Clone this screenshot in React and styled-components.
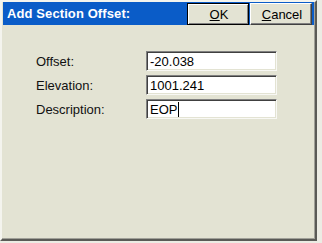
import React from 'react';
import styled, { createGlobalStyle } from 'styled-components';

const GlobalStyle = createGlobalStyle`
  html, body {
    margin: 0;
    padding: 0;
    background: #ecece4;
  }
  body {
    font-family: "Liberation Sans", Arial, sans-serif;
  }
`;

const fields = [
  { label: 'Offset:', value: '-20.038' },
  { label: 'Elevation:', value: '1001.241' },
  { label: 'Description:', value: 'EOP', focused: true },
];

const App = () => (
  <>
    <GlobalStyle />
    <Dialog>
      <TitleBar>
        <Title>Add Section Offset:</Title>
        <Buttons>
          <Button $default><u>O</u>K</Button>
          <Button><u>C</u>ancel</Button>
        </Buttons>
      </TitleBar>

      <Form>
        {fields.map(f => (
          <React.Fragment key={f.label}>
            <Label>{f.label}</Label>
            <Field>
              {f.value}
              {f.focused && <Caret />}
            </Field>
          </React.Fragment>
        ))}
      </Form>
    </Dialog>
  </>
);

export default App;

const Dialog = styled.div`
  box-sizing: border-box;
  width: 317px;
  height: 241px;
  background: #e3e3d3;
  border-style: solid;
  border-width: 2px 2px 2px 2px;
  border-color: #f4f4ee #5a5a56 #5a5a56 #f4f4ee;
  box-shadow: inset -1px -1px 0 #a0a098;
  padding: 0 1px 0 1px;
  display: flex;
  flex-direction: column;
`;

const TitleBar = styled.div`
  height: 23px;
  background: #0a5cc8;
  display: flex;
  align-items: flex-end;
  justify-content: space-between;
  padding-right: 2px;
`;

const Title = styled.div`
  align-self: center;
  padding-left: 4px;
  color: #fff;
  font-weight: bold;
  font-size: 13px;
  letter-spacing: 0.1px;
`;

const Buttons = styled.div`
  display: flex;
  gap: 1px;
`;

const Button = styled.div`
  box-sizing: border-box;
  width: 62px;
  height: 22px;
  display: flex;
  align-items: center;
  justify-content: center;
  background: #e3e3d3;
  font-size: 13px;
  color: #000;
  border: 1px solid;
  border-color: ${({ $default }) => ($default ? '#000' : '#fff #404040 #404040 #fff')};
  box-shadow: ${({ $default }) =>
    $default
      ? 'inset 1px 1px 0 #fff, inset -1px -1px 0 #808080'
      : 'inset -1px -1px 0 #808080'};
  padding-left: 2px;

  u {
    text-underline-offset: 1px;
  }
`;

const Form = styled.div`
  display: grid;
  grid-template-columns: 110px 131px;
  grid-auto-rows: 20px;
  row-gap: 4px;
  padding: 26px 0 0 33px;
  align-items: center;
`;

const Label = styled.div`
  font-size: 13px;
  color: #111;
`;

const Field = styled.div`
  box-sizing: border-box;
  height: 20px;
  background: #fff;
  border: 1px solid;
  border-color: #808080 #f8f8f4 #f8f8f4 #808080;
  box-shadow: inset 1px 1px 0 #404040, inset -1px -1px 0 #e3e3d3;
  padding: 0 3px;
  display: flex;
  align-items: center;
  font-size: 13px;
  color: #000;
`;

const Caret = styled.span`
  display: inline-block;
  width: 1px;
  height: 15px;
  background: #000;
  margin-left: 1px;
`;
